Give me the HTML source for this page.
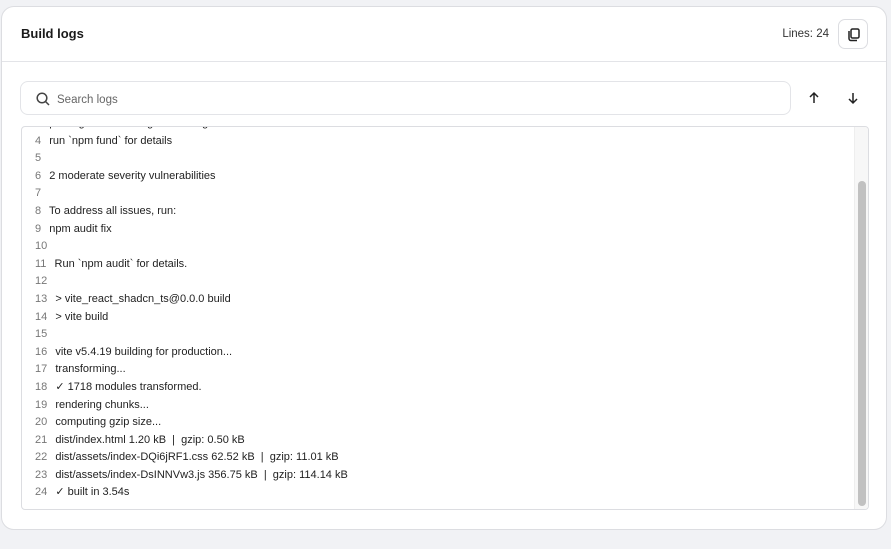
<!DOCTYPE html>
<html><head><meta charset="utf-8"><style>
*{box-sizing:border-box;margin:0;padding:0}
body{width:891px;height:549px;background:#f1f2f5;font-family:"Liberation Sans",sans-serif;position:relative;overflow:hidden;color:#222}
.card{position:absolute;left:1px;top:6px;width:886px;height:524px;background:#fff;border:1px solid #dcdde1;border-radius:13px}
.hdr{position:absolute;left:0;top:0;right:0;height:55px;border-bottom:1px solid #e3e4e8}
.title{position:absolute;left:19px;top:19px;font-size:13px;font-weight:bold;color:#1a1a1a}
.lines{position:absolute;right:57px;top:21px;font-size:11.5px;color:#333}
.copy{position:absolute;right:18px;top:12px;width:30px;height:30px;border:1px solid #dcdde1;border-radius:7px}
.search{position:absolute;left:18px;top:74px;width:771px;height:34px;border:1px solid #e3e4e8;border-radius:8px}
.search span{position:absolute;left:36px;top:12px;font-size:11.5px;color:#666}
.arr{position:absolute;top:84px}
.log{position:absolute;left:19px;top:119px;width:848px;height:384px;border:1px solid #dcdde1;border-radius:4px;overflow:hidden}
.inner{position:absolute;left:13px;top:-12px;font-size:11px;line-height:17.6px;color:#222}
.inner div{white-space:pre}
.n{color:#777;margin-right:2px}
.track{position:absolute;right:0;top:0;width:14px;height:100%;background:#f7f7f7;border-left:1px solid #eee}
.thumb{position:absolute;left:3px;top:54px;width:8px;height:325px;background:#c1c1c1;border-radius:4px}
</style></head><body>
<div class="card">
 <div class="hdr">
  <div class="title">Build logs</div>
  <div class="lines">Lines: 24</div>
  <div class="copy"><svg width="30" height="30" viewBox="0 0 30 30" fill="none" stroke="#222" stroke-width="1.5"><rect x="12" y="9" width="8" height="9" rx="1.5"/><path d="M10 11v7.5a2 2 0 0 0 2 2h6"/></svg></div>
 </div>
 <div class="search">
  <svg style="position:absolute;left:14px;top:9px" width="16" height="16" viewBox="0 0 16 16" fill="none" stroke="#444" stroke-width="1.5"><circle cx="7" cy="7" r="4.8"/><path d="M10.5 10.5l3.5 3.5"/></svg>
  <span>Search logs</span>
 </div>
 <svg class="arr" style="left:805px" width="14" height="14" viewBox="0 0 14 14" fill="none" stroke="#222" stroke-width="1.5"><path d="M7 12V2M3 6l4-4 4 4"/></svg>
 <svg class="arr" style="left:844px" width="14" height="14" viewBox="0 0 14 14" fill="none" stroke="#222" stroke-width="1.5"><path d="M7 2v10M3 8l4 4 4-4"/></svg>
 <div class="log">
  <div class="inner">
<div><span class="n">3</span>  packages are looking for funding</div>
<div><span class="n">4</span>  run `npm fund` for details</div>
<div><span class="n">5</span></div>
<div><span class="n">6</span>  2 moderate severity vulnerabilities</div>
<div><span class="n">7</span></div>
<div><span class="n">8</span>  To address all issues, run:</div>
<div><span class="n">9</span>  npm audit fix</div>
<div><span class="n">10</span></div>
<div><span class="n">11</span>  Run `npm audit` for details.</div>
<div><span class="n">12</span></div>
<div><span class="n">13</span>  &gt; vite_react_shadcn_ts@0.0.0 build</div>
<div><span class="n">14</span>  &gt; vite build</div>
<div><span class="n">15</span></div>
<div><span class="n">16</span>  vite v5.4.19 building for production...</div>
<div><span class="n">17</span>  transforming...</div>
<div><span class="n">18</span>  ✓ 1718 modules transformed.</div>
<div><span class="n">19</span>  rendering chunks...</div>
<div><span class="n">20</span>  computing gzip size...</div>
<div><span class="n">21</span>  dist/index.html 1.20 kB  |  gzip: 0.50 kB</div>
<div><span class="n">22</span>  dist/assets/index-DQi6jRF1.css 62.52 kB  |  gzip: 11.01 kB</div>
<div><span class="n">23</span>  dist/assets/index-DsINNVw3.js 356.75 kB  |  gzip: 114.14 kB</div>
<div><span class="n">24</span>  ✓ built in 3.54s</div>
  </div>
  <div class="track"><div class="thumb"></div></div>
 </div>
</div>
</body></html>
